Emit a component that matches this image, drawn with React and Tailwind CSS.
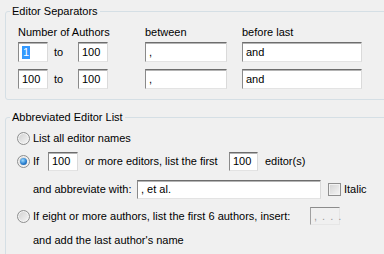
import React from 'react';
import clsx from 'clsx';

// Sunken Windows-style text box
const Field = ( { className, children, disabled } ) => (
	<div
		className={ clsx(
			'flex shrink-0 items-center border pl-[3px] whitespace-nowrap',
			disabled
				? 'border-t-[#8c8c8c] border-l-[#a0a0a0] border-r-[#e6e6e6] border-b-[#e6e6e6] bg-[#f0f0f0] text-[#9a9a9a]'
				: 'border-t-[#6d6d6d] border-l-[#8a8a8a] border-r-[#dadada] border-b-[#e3e3e3] bg-white shadow-[inset_0_1px_0_#b4b4b4]',
			className
		) }
	>
		{ children }
	</div>
);

const Radio = ( { checked } ) => (
	<div className="flex h-[13px] w-[13px] shrink-0 items-center justify-center rounded-full border border-[#8e8f8f] bg-[linear-gradient(135deg,#cfcfcf,#f7f7f7)] shadow-[inset_0_0_0_1px_#f4f4f4]">
		{ checked && (
			<div className="h-[7px] w-[7px] rounded-full bg-[radial-gradient(circle_at_40%_35%,#9ddcff,#2b80d0_55%,#0c4a92)]" />
		) }
	</div>
);

const Checkbox = () => (
	<div className="h-[13px] w-[13px] shrink-0 border border-[#8f8f8f] bg-[linear-gradient(135deg,#d2d2d2,#f6f6f6)] shadow-[inset_0_0_0_1px_#f2f2f2]" />
);

const GroupBox = ( { title, className, children } ) => (
	<fieldset className={ clsx( 'ml-[5px] w-[400px] rounded-[3px] border border-[#d5dfe5]', className ) }>
		<legend className="ml-[4px] px-[2px] leading-[13px]">{ title }</legend>
		{ children }
	</fieldset>
);

export default function App() {
	return (
		<div className="h-[254px] w-[384px] overflow-hidden bg-[#f0f0f0] pt-[5px] font-['Liberation_Sans',Arial,sans-serif] text-[11px] leading-[13px] text-black">
			<GroupBox title="Editor Separators" className="pb-[10px]">
				<div className="pl-[12px] pt-[8px]">
					<div className="flex">
						<span className="w-[127px]">Number of Authors</span>
						<span className="w-[97px]">between</span>
						<span>before last</span>
					</div>

					<div className="mt-[3px] flex h-[20px] items-center">
						<Field className="h-[20px] w-[30px] pl-[1px]">
							<span className="bg-[#3399ff] px-[1px] text-white">1</span>
						</Field>
						<span className="ml-[6px] w-[24px]">to</span>
						<Field className="h-[20px] w-[30px]">100</Field>
						<Field className="ml-[37px] h-[20px] w-[82px]">,</Field>
						<Field className="ml-[15px] h-[20px] w-[120px]">and</Field>
					</div>

					<div className="mt-[7px] flex h-[20px] items-center">
						<Field className="h-[20px] w-[30px]">100</Field>
						<span className="ml-[6px] w-[24px]">to</span>
						<Field className="h-[20px] w-[30px]">100</Field>
						<Field className="ml-[37px] h-[20px] w-[82px]">,</Field>
						<Field className="ml-[15px] h-[20px] w-[120px]">and</Field>
					</div>
				</div>
			</GroupBox>

			<GroupBox title="Abbreviated Editor List" className="mt-[11px] pb-[10px]">
				<div className="pl-[11px] pt-[4px]">
					<div className="flex h-[20px] items-center">
						<Radio />
						<span className="ml-[3px]">List all editor names</span>
					</div>

					<div className="mt-[3px] flex h-[20px] items-center">
						<Radio checked />
						<span className="ml-[3px] w-[15px]">If</span>
						<Field className="h-[19px] w-[30px]">100</Field>
						<span className="ml-[7px] w-[144px] whitespace-nowrap">or more editors, list the first</span>
						<Field className="h-[19px] w-[29px]">100</Field>
						<span className="ml-[7px]">editor(s)</span>
					</div>

					<div className="mt-[8px] flex h-[20px] items-center pl-[16px]">
						<span className="w-[104px] whitespace-nowrap">and abbreviate with:</span>
						<Field className="h-[19px] w-[184px]">, et al.</Field>
						<div className="ml-[7px]">
							<Checkbox />
						</div>
						<span className="ml-[3px]">Italic</span>
					</div>

					<div className="mt-[7px] flex h-[20px] items-center">
						<Radio />
						<span className="ml-[3px] w-[277px] whitespace-nowrap">If eight or more authors, list the first 6 authors, insert:</span>
						<Field disabled className="h-[18px] w-[30px] tracking-[1px]">, . . .</Field>
					</div>

					<div className="mt-[4px] flex h-[20px] items-center pl-[16px]">
						<span>and add the last author's name</span>
					</div>
				</div>
			</GroupBox>
		</div>
	);
}
